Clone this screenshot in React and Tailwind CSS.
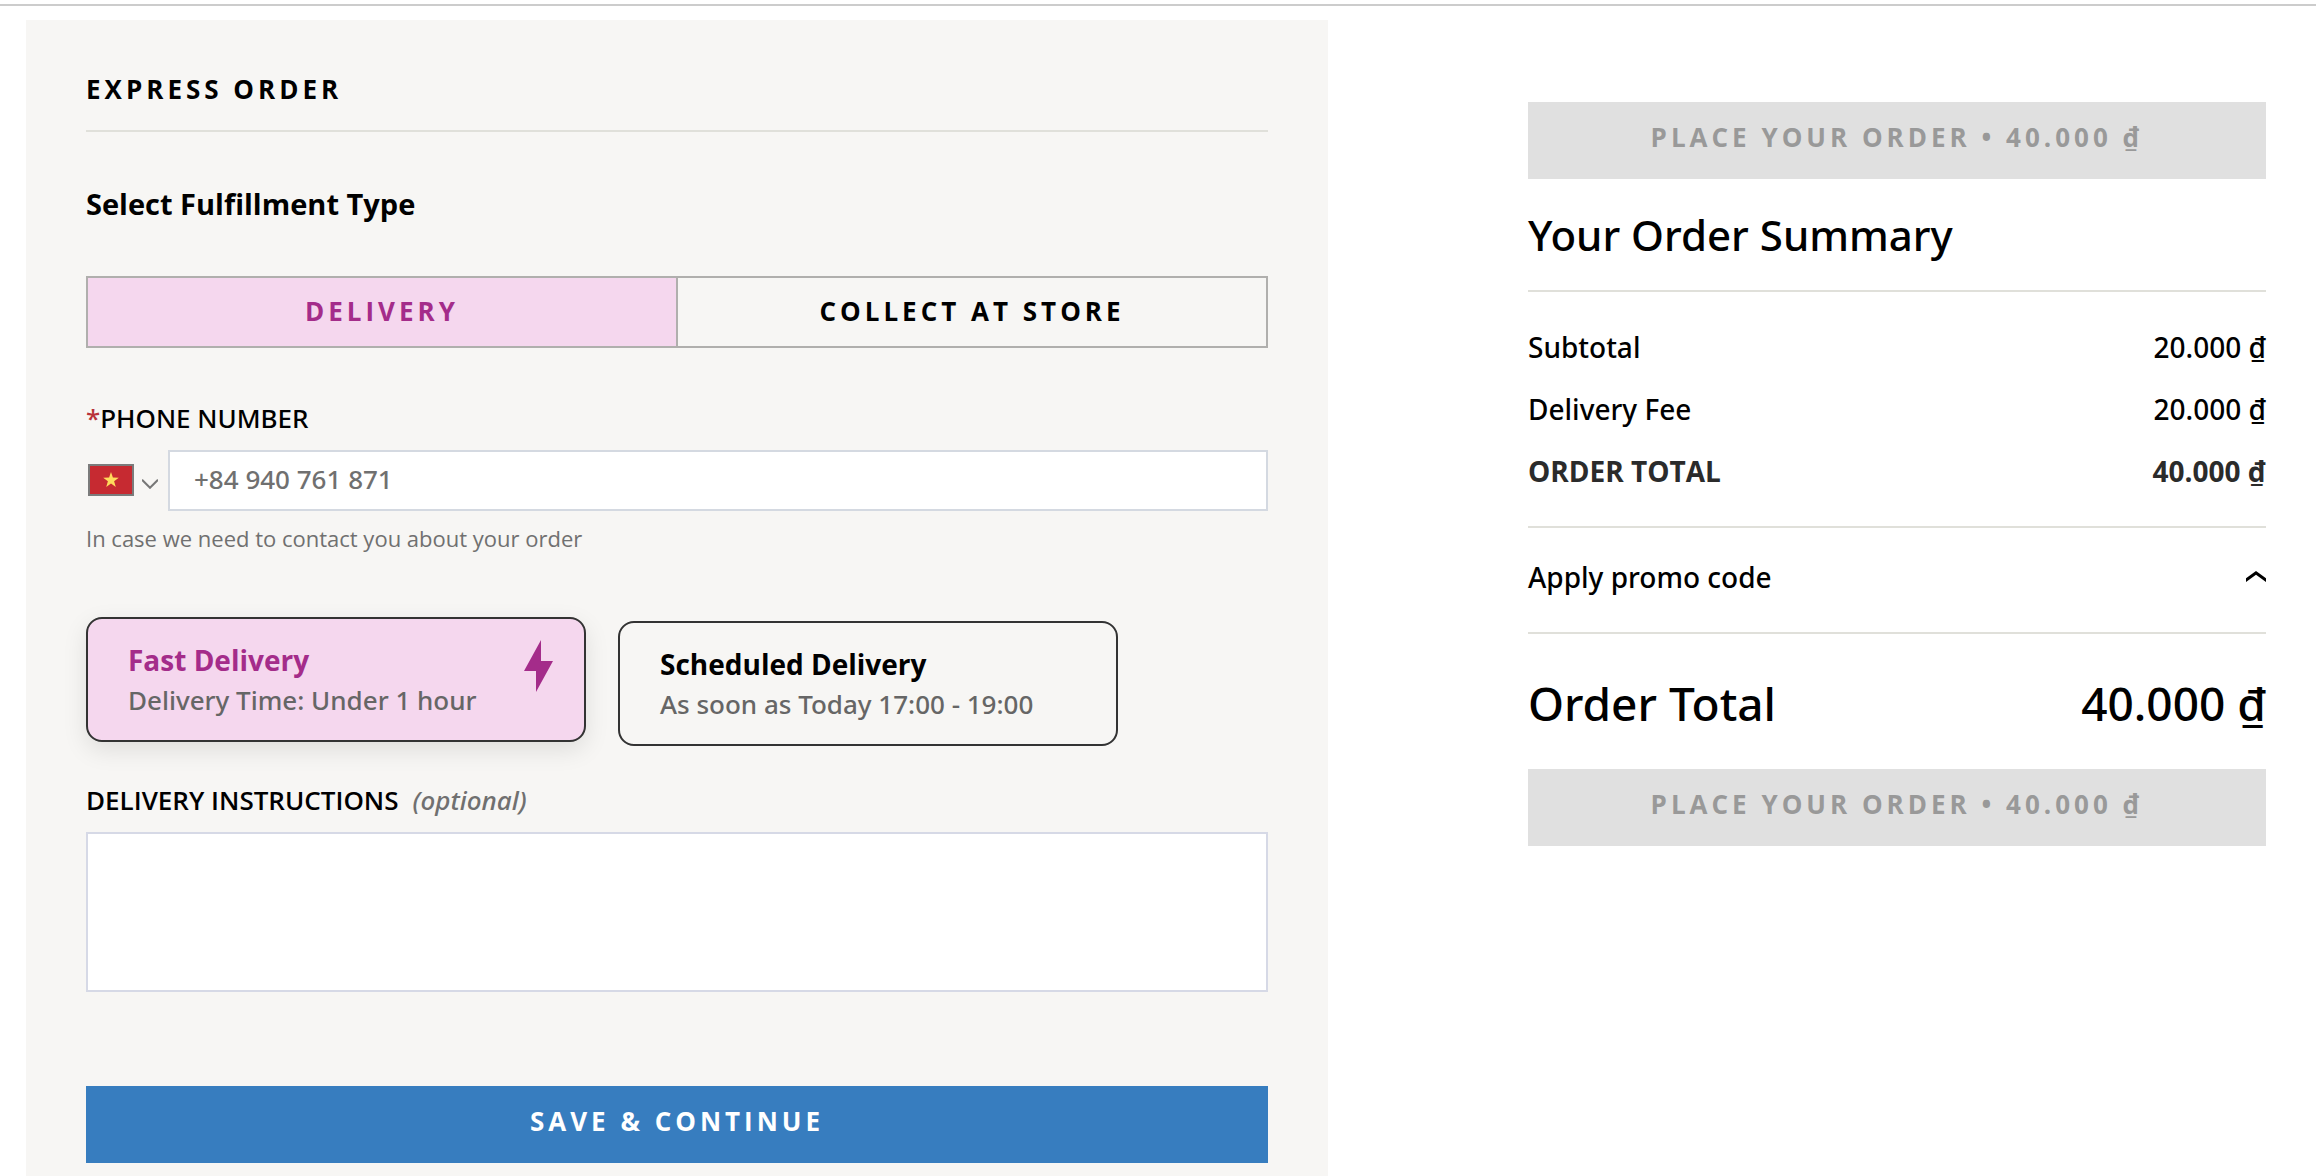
import { useState } from "react";

const PRICE_ROWS = [
  { label: "Subtotal", value: "20.000 ₫" },
  { label: "Delivery Fee", value: "20.000 ₫" },
];

function PlaceOrderButton() {
  return (
    <button
      type="button"
      disabled
      className="block w-full bg-[#e0e0e0] pt-[17px] pb-6 text-center font-['Open_Sans',sans-serif] text-[26px] leading-9 font-bold tracking-[4px] text-[#999]"
    >
      PLACE YOUR ORDER • 40.000 ₫
    </button>
  );
}

function FulfillmentTab({ active, children, onClick }) {
  return (
    <button
      type="button"
      aria-pressed={active}
      onClick={onClick}
      className={
        "flex-1 border-[#b0afad] pt-[15px] pb-[17px] text-[26px] leading-9 font-bold tracking-[4px] not-first:border-l-2 " +
        (active ? "bg-[#f5d7ee] text-[#a42c8a]" : "text-black")
      }
    >
      {children}
    </button>
  );
}

function Bolt() {
  return (
    <svg width="29" height="52" viewBox="0 0 29 52" fill="#a42c8a" aria-hidden="true">
      <path d="M17 0 0 31h12v21l17-31H17z" />
    </svg>
  );
}

function DeliveryCard({ value, title, detail, selected, onSelect, icon }) {
  return (
    <label
      className={
        "flex w-[500px] items-start justify-between rounded-2xl border-2 border-[#333] pt-[21px] pr-[31px] pb-5 pl-10 " +
        (selected ? "-translate-y-1 bg-[#f5d7ee] shadow-[0_8px_24px_rgba(0,0,0,0.1)]" : "")
      }
    >
      <input
        type="radio"
        name="speed"
        value={value}
        checked={selected}
        onChange={onSelect}
        className="sr-only"
      />
      <span className="block leading-10">
        <span
          className={
            "block font-['Open_Sans',sans-serif] text-[28px] leading-10 font-bold " +
            (selected ? "text-[#a42c8a]" : "text-black")
          }
        >
          {title}
        </span>
        <span className="block text-[26px] leading-10 font-medium text-[#666]">{detail}</span>
      </span>
      {icon}
    </label>
  );
}

export default function App() {
  const [mode, setMode] = useState("delivery");
  const [speed, setSpeed] = useState("fast");

  return (
    <div className="flex min-h-screen flex-col bg-white font-['Noto_Sans',sans-serif] text-black">
      <header className="h-1.5 border-b-2 border-[#ccc]" />
      <div className="grid flex-1 grid-cols-[1302fr_738fr] gap-[200px] pt-3.5 pr-[50px] pl-[26px]">
        <main className="bg-[#f7f6f4] px-[60px] pt-[51px] pb-3">
          <h1 className="border-b-2 border-[#e0e0da] pb-[23px] font-['Open_Sans',sans-serif] text-[26px] leading-9 font-bold tracking-[4px]">
            EXPRESS ORDER
          </h1>
          <h2 className="mt-[52px] font-['Open_Sans',sans-serif] text-[29px] leading-10 font-bold">
            Select Fulfillment Type
          </h2>
          <div className="mt-[52px] flex border-2 border-[#b0afad] font-['Open_Sans',sans-serif]">
            <FulfillmentTab active={mode === "delivery"} onClick={() => setMode("delivery")}>
              DELIVERY
            </FulfillmentTab>
            <FulfillmentTab active={mode === "collect"} onClick={() => setMode("collect")}>
              COLLECT AT STORE
            </FulfillmentTab>
          </div>

          <label htmlFor="phone" className="mt-[52px] block text-[26px] leading-9 font-medium">
            <span className="text-[#b8323a]">*</span>PHONE NUMBER
          </label>
          <div className="mt-3.5 flex">
            <button type="button" aria-label="Country: Vietnam" className="flex w-[82px] items-center gap-2 pb-0.5 pl-0.5">
              <svg width="46" height="32" viewBox="0 0 46 32" aria-hidden="true">
                <rect x="1" y="1" width="44" height="30" fill="#c62a31" stroke="#7b7b7b" strokeWidth="2" />
                <path
                  d="m23 8 1.9 5.6 5.9.1-4.7 3.5 1.7 5.7-4.8-3.4-4.8 3.4 1.7-5.7-4.7-3.5 5.9-.1z"
                  fill="#ffda5c"
                />
              </svg>
              <svg width="16" height="10" viewBox="0 0 16 10" fill="none" stroke="#777" strokeWidth="2" className="mt-2" aria-hidden="true">
                <path d="m0 .8 8 8 8-8" />
              </svg>
            </button>
            <input
              id="phone"
              type="tel"
              placeholder="+84 940 761 871"
              className="h-[61px] min-w-0 flex-1 border-2 border-[#d4d9e1] bg-white px-6 pb-1 text-[26px] font-medium placeholder:text-[#707070]"
            />
          </div>
          <p className="mt-3 font-['Open_Sans',sans-serif] text-[22px] leading-[30px] text-[#707070]">
            In case we need to contact you about your order
          </p>

          <div className="mt-[68px] flex gap-8">
            <DeliveryCard
              value="fast"
              title="Fast Delivery"
              detail="Delivery Time: Under 1 hour"
              selected={speed === "fast"}
              onSelect={() => setSpeed("fast")}
              icon={<Bolt />}
            />
            <DeliveryCard
              value="scheduled"
              title="Scheduled Delivery"
              detail="As soon as Today 17:00 - 19:00"
              selected={speed === "scheduled"}
              onSelect={() => setSpeed("scheduled")}
            />
          </div>

          <label htmlFor="notes" className="mt-9 flex gap-3.5 text-[26px] leading-9">
            <span className="font-['Open_Sans',sans-serif] font-semibold">DELIVERY INSTRUCTIONS</span>
            <span className="font-medium text-[#707070] italic">(optional)</span>
          </label>
          <textarea
            id="notes"
            className="mt-3.5 block h-40 w-full resize-none border-2 border-[#d6d9e6] bg-white px-6 py-3 text-[26px]"
          />
          <button
            type="submit"
            className="mt-[94px] block w-full bg-[#377dbf] pt-[17px] pb-6 font-['Open_Sans',sans-serif] text-[26px] leading-9 font-bold tracking-[4px] text-white"
          >
            SAVE &amp; CONTINUE
          </button>
        </main>

        <aside className="pt-[82px]">
          <PlaceOrderButton />
          <h2 className="mt-7 border-b-2 border-[#e0e0da] pb-[27px] text-[42px] leading-14 font-medium">
            Your Order Summary
          </h2>
          <dl className="flex flex-col gap-6 border-b-2 border-[#e0e0da] py-9 text-[28px] leading-[38px] font-medium">
            {PRICE_ROWS.map((row) => (
              <div key={row.label} className="flex justify-between">
                <dt>{row.label}</dt>
                <dd>{row.value}</dd>
              </div>
            ))}
            <div className="flex justify-between font-['Open_Sans',sans-serif] font-bold text-[#2b2b2b]">
              <dt>ORDER TOTAL</dt>
              <dd>40.000 ₫</dd>
            </div>
          </dl>
          <button
            type="button"
            className="flex w-full items-center justify-between border-b-2 border-[#e0e0da] pt-[30px] pb-9 text-[28px] leading-[38px] font-medium"
          >
            Apply promo code
            <svg width="20" height="12" viewBox="0 0 20 12" fill="#000" aria-hidden="true">
              <path d="M0 7.2 10 0l10 7.2V11l-10-7.2L0 11z" />
            </svg>
          </button>
          <p className="mt-[38px] mb-[35px] flex justify-between text-[46px] leading-[62px] font-medium">
            <span>Order Total</span>
            <span>40.000 ₫</span>
          </p>
          <PlaceOrderButton />
        </aside>
      </div>
    </div>
  );
}
